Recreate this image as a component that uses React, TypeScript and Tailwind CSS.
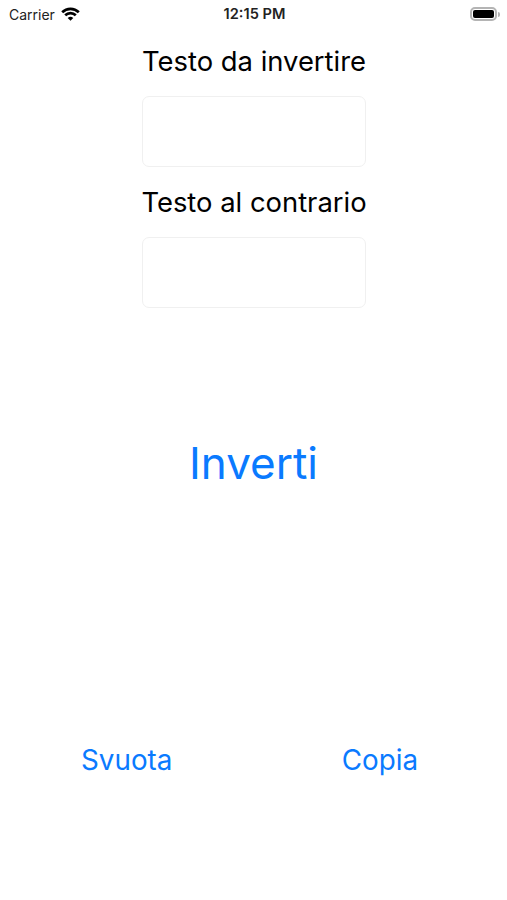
function WifiIcon() {
  return (
    <svg width="19" height="14" viewBox="0 0 19 14" fill="none" stroke="#000" strokeWidth="2.7">
      <path d="M1.2 5.2a11.8 11.8 0 0 1 16.6 0" />
      <path d="M4.2 8.2a7.6 7.6 0 0 1 10.6 0" />
      <path d="M9.5 13.8 6.7 11a4 4 0 0 1 5.6 0z" fill="#000" stroke="none" />
    </svg>
  );
}

function Field({ label }: { label: string }) {
  return (
    <div className="flex w-[224px] flex-col items-center">
      <div className="h-[41px] whitespace-nowrap text-[27.4px] leading-[41px] text-black">{label}</div>
      <div className="mt-[14px] h-[71px] w-full rounded-[7px] border border-[#f0f0f0] bg-white" />
    </div>
  );
}

export default function App() {
  return (
    <div className="flex h-[900px] w-[507px] flex-col bg-white font-['Inter','Liberation_Sans',sans-serif]">
      <div className="flex h-[28px] items-center justify-between pl-[9px] pr-[7px] text-[#222]">
        <div className="flex w-[160px] items-center gap-[6px] text-[14px]">
          Carrier
          <WifiIcon />
        </div>
        <div className="mt-px text-[14.6px] font-semibold">12:15 PM</div>
        <div className="flex w-[160px] justify-end">
          <div className="flex items-center">
            <div className="h-[14px] w-[27px] rounded-[5px] border-2 border-[#b4b4b4] p-px">
              <div className="h-full w-full rounded-[2px] bg-black" />
            </div>
            <div className="ml-px h-[5px] w-[2px] rounded-r-sm bg-[#b4b4b4]" />
          </div>
        </div>
      </div>
      <div className="mt-[13px] flex flex-col items-center gap-[15px] pl-px">
        <Field label="Testo da invertire" />
        <Field label="Testo al contrario" />
      </div>
      <div className="mt-[125px] text-center text-[44px] leading-[60px] text-[#0a7aff]">Inverti</div>
      <div className="mt-[247px] flex justify-between pl-[81px] pr-[89px] text-[27.8px] leading-[40px] text-[#0a7aff]">
        <span>Svuota</span>
        <span>Copia</span>
      </div>
    </div>
  );
}
